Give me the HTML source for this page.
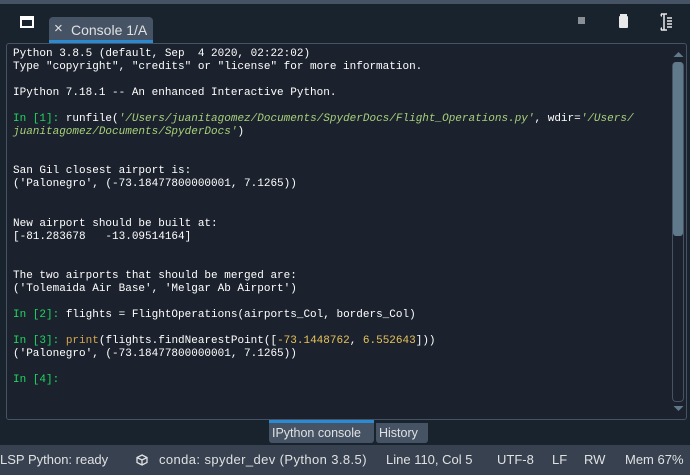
<!DOCTYPE html>
<html><head><meta charset="utf-8"><style>
*{margin:0;padding:0;box-sizing:border-box}
body{width:690px;height:475px;background:#19232d;position:relative;overflow:hidden;font-family:"Liberation Sans",sans-serif}
.topband{position:absolute;left:0;top:0;width:690px;height:4px;background:#455364}
.tab{position:absolute;left:49px;top:17px;width:104px;height:26px;background:#455364;border-radius:4px 4px 0 0;color:#e0e1e3;font-size:14px;line-height:25px;white-space:nowrap;overflow:hidden}
.tab .x{position:absolute;left:5px;top:-1px;font-size:15px}
.tab .t{position:absolute;left:22px;top:1px}
.tab .bl{position:absolute;left:0;bottom:0;width:100%;height:3px;background:#2a8ad4}
.pane{position:absolute;left:6px;top:43px;width:681px;height:377px;border:1px solid #455364;border-radius:3px;background:#1b222d}
pre{position:absolute;left:13px;top:48px;font-family:"Liberation Mono",monospace;font-size:11px;line-height:13.05px;color:#ffffff}
.g{color:#1ed760}.s{color:#a7d07a;font-style:italic}.y{color:#e8c35a}.o{color:#d7a64b}
.track{position:absolute;left:672px;top:62px;width:12px;height:340px;border:1px solid #455364;border-radius:4px}
.thumb{position:absolute;left:673px;top:62px;width:10px;height:174px;background:#60798b;border-radius:3px}
.btab{position:absolute;top:423px;height:20px;background:#455364;color:#e0e1e3;font-size:12.5px;line-height:20px;padding:0 3px;border-radius:0 0 3px 3px}
.status{position:absolute;left:0;top:445px;width:690px;height:30px;background:#37414f;color:#e0e1e3;font-size:13px;line-height:30px}
.status span{position:absolute;top:0;white-space:nowrap}
</style></head><body>
<div class="topband"></div>
<svg style="position:absolute;left:20px;top:16px" width="14" height="12"><rect x="1" y="1" width="12" height="10" fill="none" stroke="#fff" stroke-width="2"/><rect x="1" y="1" width="12" height="3" fill="#fff"/></svg>
<div class="tab"><span class="x">×</span><span class="t">Console 1/A</span><div class="bl"></div></div>
<div style="position:absolute;left:578px;top:17px;width:7px;height:7px;background:#8a8f96"></div>
<svg style="position:absolute;left:618px;top:14px" width="12" height="16"><rect x="1" y="2" width="9" height="12" fill="#e8e8e8" rx="1"/><rect x="2" y="0" width="7" height="2" fill="#e8e8e8"/></svg>
<svg style="position:absolute;left:659px;top:12px" width="14" height="20"><path d="M2 2h6M2 18h6M5 2v16M3 2c-1 0-1 2 0 2M3 18c-1 0-1-2 0-2M8 6h5M8 9h5M8 12h5M8 15h5" stroke="#e8e8e8" stroke-width="1.5" fill="none"/></svg>
<div class="pane"></div>
<pre>Python 3.8.5 (default, Sep  4 2020, 02:22:02)
Type "copyright", "credits" or "license" for more information.

IPython 7.18.1 -- An enhanced Interactive Python.

<span class="g">In [1]:</span> runfile(<span class="s">'/Users/juanitagomez/Documents/SpyderDocs/Flight_Operations.py'</span>, wdir=<span class="s">'/Users/</span>
<span class="s">juanitagomez/Documents/SpyderDocs'</span>)


San Gil closest airport is:
('Palonegro', (-73.18477800000001, 7.1265))


New airport should be built at:
[-81.283678   -13.09514164]


The two airports that should be merged are:
('Tolemaida Air Base', 'Melgar Ab Airport')

<span class="g">In [2]:</span> flights = FlightOperations(airports_Col, borders_Col)

<span class="g">In [3]:</span> <span class="o">print</span>(flights.findNearestPoint([<span class="y">-73.1448762</span>, <span class="y">6.552643</span>]))
('Palonegro', (-73.18477800000001, 7.1265))

<span class="g">In [4]:</span></pre>
<svg style="position:absolute;left:673px;top:51px" width="11" height="7"><path d="M0.5 6L5.5 1L10.5 6Z" fill="#60798b"/></svg>
<div class="track"></div>
<div class="thumb"></div>
<svg style="position:absolute;left:673px;top:405px" width="11" height="7"><path d="M0.5 1L5.5 6L10.5 1Z" fill="#60798b"/></svg>
<div style="position:absolute;left:269px;top:420px;width:105px;height:3px;background:#2a8ad4"></div>
<div class="btab" style="left:269px;width:105px">IPython console</div>
<div class="btab" style="left:376px;width:52px">History</div>
<div class="status">
<span style="left:0">LSP Python: ready</span>
<svg style="position:absolute;left:136px;top:9px" width="12" height="12"><path d="M6 1L11 3.5V8.5L6 11L1 8.5V3.5Z M1 3.5L6 6L11 3.5M6 6V11" fill="none" stroke="#e0e1e3" stroke-width="1.3"/></svg>
<span style="left:159px;letter-spacing:0.4px">conda: spyder_dev (Python 3.8.5)</span>
<span style="left:386px">Line 110, Col 5</span>
<span style="left:497px">UTF-8</span>
<span style="left:552px">LF</span>
<span style="left:584px">RW</span>
<span style="left:625px">Mem 67%</span>
</div>
</body></html>
